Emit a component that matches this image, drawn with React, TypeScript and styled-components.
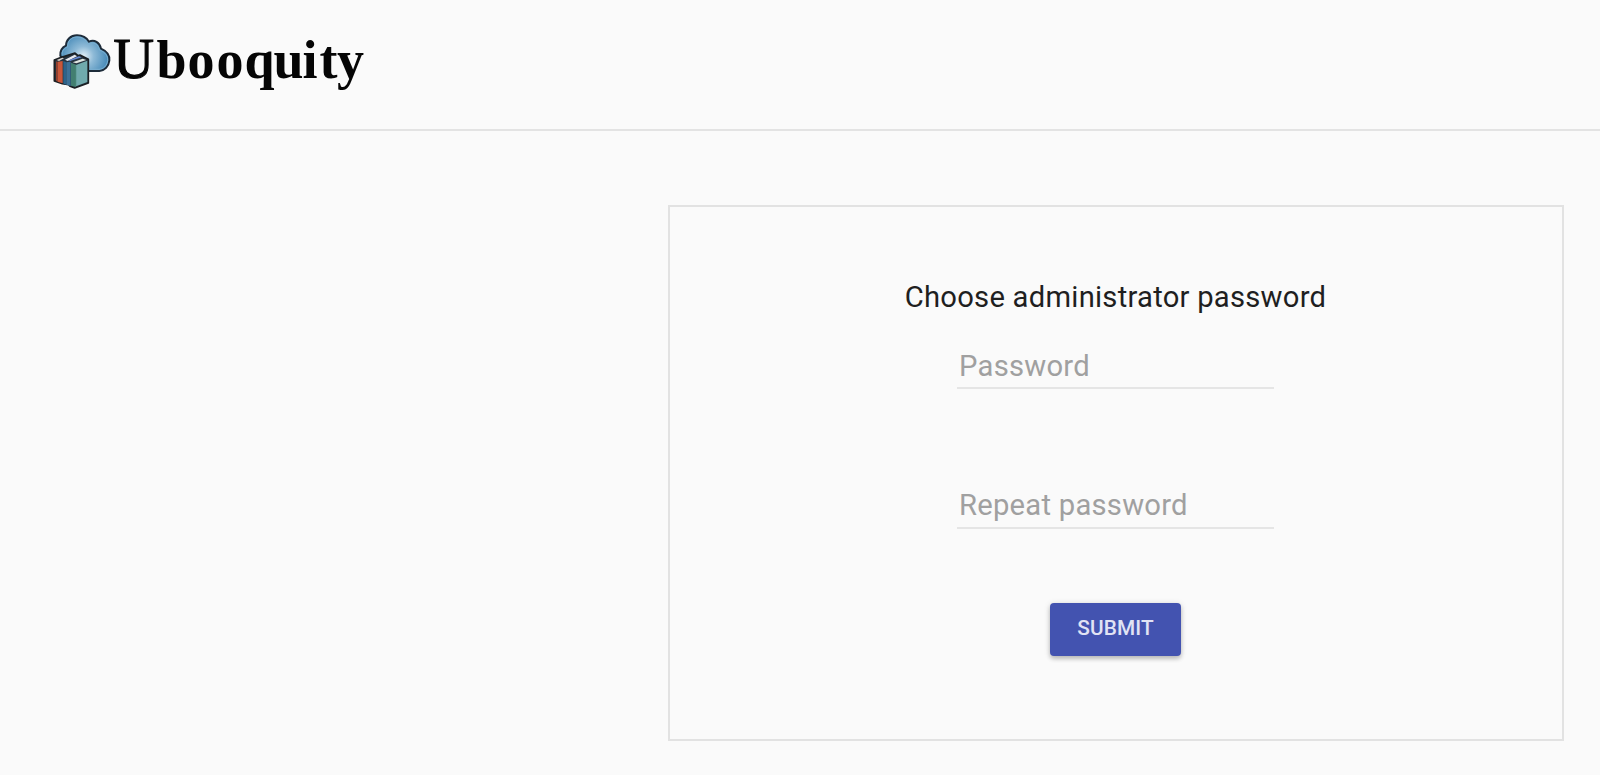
import { useState } from 'react';
import styled, { createGlobalStyle } from 'styled-components';

const GlobalStyle = createGlobalStyle`
  * {
    box-sizing: border-box;
  }
  body {
    margin: 0;
    background-color: #fafafa;
    color: #1f1f1f;
    font-family: Roboto, 'Liberation Sans', sans-serif;
  }
`;

const Page = styled.div`
  display: flex;
  flex-direction: column;
  height: 775px;
  overflow: hidden;
`;

const Header = styled.header`
  height: 131px;
  padding: 25px 0 0 45px;
  border-bottom: 2px solid #e3e3e3;
`;

const LogoSvg = styled.svg`
  display: block;
  width: 335px;
  height: 80px;
`;

const Wordmark = styled.text`
  font-family: 'Liberation Serif', 'Times New Roman', serif;
  font-size: 54px;
  font-weight: 700;
  fill: #050505;
`;

// the capital is lighter than the rest of the name
const Capital = styled.tspan`
  font-size: 56px;
  font-weight: 400;
  stroke: #050505;
  stroke-width: 1.2px;
`;

const Main = styled.main`
  display: flex;
  justify-content: flex-end;
  padding: 74px 36px 0 0;
`;

const Panel = styled.form`
  display: flex;
  flex-direction: column;
  align-items: center;
  width: 896px;
  height: 536px;
  padding: 70px 1px 0 0;
  border: 2px solid #e2e2e2;
`;

const Title = styled.div`
  height: 40px;
  font-size: 29.2px;
  line-height: 40px;
  letter-spacing: 0.25px;
  white-space: nowrap;
`;

interface FieldProps {
  gap: string;
  lift?: string;
}

const Field = styled.input<FieldProps>`
  width: 317px;
  height: 45px;
  margin-top: ${(props) => props.gap};
  padding: 0 2px ${(props) => props.lift || '0'};
  border: 0;
  border-bottom: 2px solid #e5e5e5;
  border-radius: 0;
  outline: none;
  background: none;
  color: #1f1f1f;
  font-family: inherit;
  font-size: 29.2px;
  letter-spacing: 0.25px;
  &::placeholder {
    color: #a0a0a0;
    opacity: 1;
  }
`;

const SubmitButton = styled.button`
  width: 131px;
  height: 53px;
  margin-top: 74px;
  padding: 0 0 3px;
  border: 0;
  border-radius: 4px;
  background-color: #4353b0;
  box-shadow: 0 3px 4px rgba(0, 0, 0, 0.18), 0 1px 6px rgba(0, 0, 0, 0.15);
  color: #e1e3f4;
  font-family: inherit;
  font-size: 20.8px;
  font-weight: 500;
  line-height: 50px;
  letter-spacing: 0.15px;
  text-transform: uppercase;
  cursor: pointer;
`;

const Logo = () => (
  <LogoSvg viewBox='0 0 335 80' role='img' aria-label='Ubooquity'>
    <defs>
      <radialGradient id='cloud' gradientUnits='userSpaceOnUse' cx='116' cy='94' r='75'>
        <stop offset='0' stopColor='#e3f0f8' />
        <stop offset='0.4' stopColor='#8ebad7' />
        <stop offset='1' stopColor='#4388b7' />
      </radialGradient>
    </defs>
    <g transform='scale(0.33333)' strokeLinejoin='round'>
      <path
        d='M46 92C45 78 52 67 63 62C63 44 77 31 96 31C113 31 126 40 132 50C148 43 164 52 168 71C184 78 195 90 193 107C191 124 179 136 163 138H112L84 112L48 96Z'
        fill='url(#cloud)'
        stroke='#1d2b39'
        strokeWidth='6'
      />
      <path
        d='M52 89C50 79 57 69 68 66C67 48 79 36 96 36C112 36 123 45 129 57C147 49 161 58 163 75C181 82 189 93 188 106C186 122 176 132 162 133H133'
        fill='none'
        stroke='#7bb0d1'
        strokeWidth='3'
      />
      <path d='M28 105L49 97L90 84L99 92L105 90L130 103V174L89 189L75 184L71 179L52 176L28 168Z' fill='#263440' stroke='#1b1f23' strokeWidth='5' />
      <path d='M33 109L38 111V170L33 167Z' fill='#943f2c' />
      <path d='M38 110L53 108V175L38 170Z' fill='#c9573a' />
      <path d='M35 105L52 98L57 100L42 108Z' fill='#ddd5cf' />
      <path d='M55 108L64 112V179L55 176Z' fill='#2c638b' />
      <path d='M64 112L77 110V183L64 179Z' fill='#3b7198' />
      <path d='M60 104L89 89L96 94L68 108Z' fill='#e8e9ef' />
      <path d='M73 109L110 97L102 94L73 105Z' fill='#688bd5' />
      <path d='M78 113L93 119V186L78 182Z' fill='#427f70' />
      <path d='M93 120L127 107V171L93 184Z' fill='#70aaad' />
      <path d='M83 112L113 101L124 105L94 115Z' fill='#dfe5e0' />
      <path d='M94 121V183' fill='none' stroke='#63a09b' strokeWidth='3' />
    </g>
    <Wordmark x='68.5 111.5 142.5 171.5 199.5 228.5 257.5 274.5 292' y='53'>
      <Capital>U</Capital>
      booquity
    </Wordmark>
  </LogoSvg>
);

const App = () => {
  const [password, setPassword] = useState('');
  const [repeat, setRepeat] = useState('');
  return (
    <Page>
      <GlobalStyle />
      <Header>
        <Logo />
      </Header>
      <Main>
        <Panel onSubmit={(event) => { event.preventDefault(); }}>
          <Title>Choose administrator password</Title>
          <Field
            gap='27px'
            type='password'
            placeholder='Password'
            value={password}
            onChange={(event) => { setPassword(event.target.value); }}
          />
          <Field
            gap='95px'
            lift='2px'
            type='password'
            placeholder='Repeat password'
            value={repeat}
            onChange={(event) => { setRepeat(event.target.value); }}
          />
          <SubmitButton type='submit'>Submit</SubmitButton>
        </Panel>
      </Main>
    </Page>
  );
};

export default App;
